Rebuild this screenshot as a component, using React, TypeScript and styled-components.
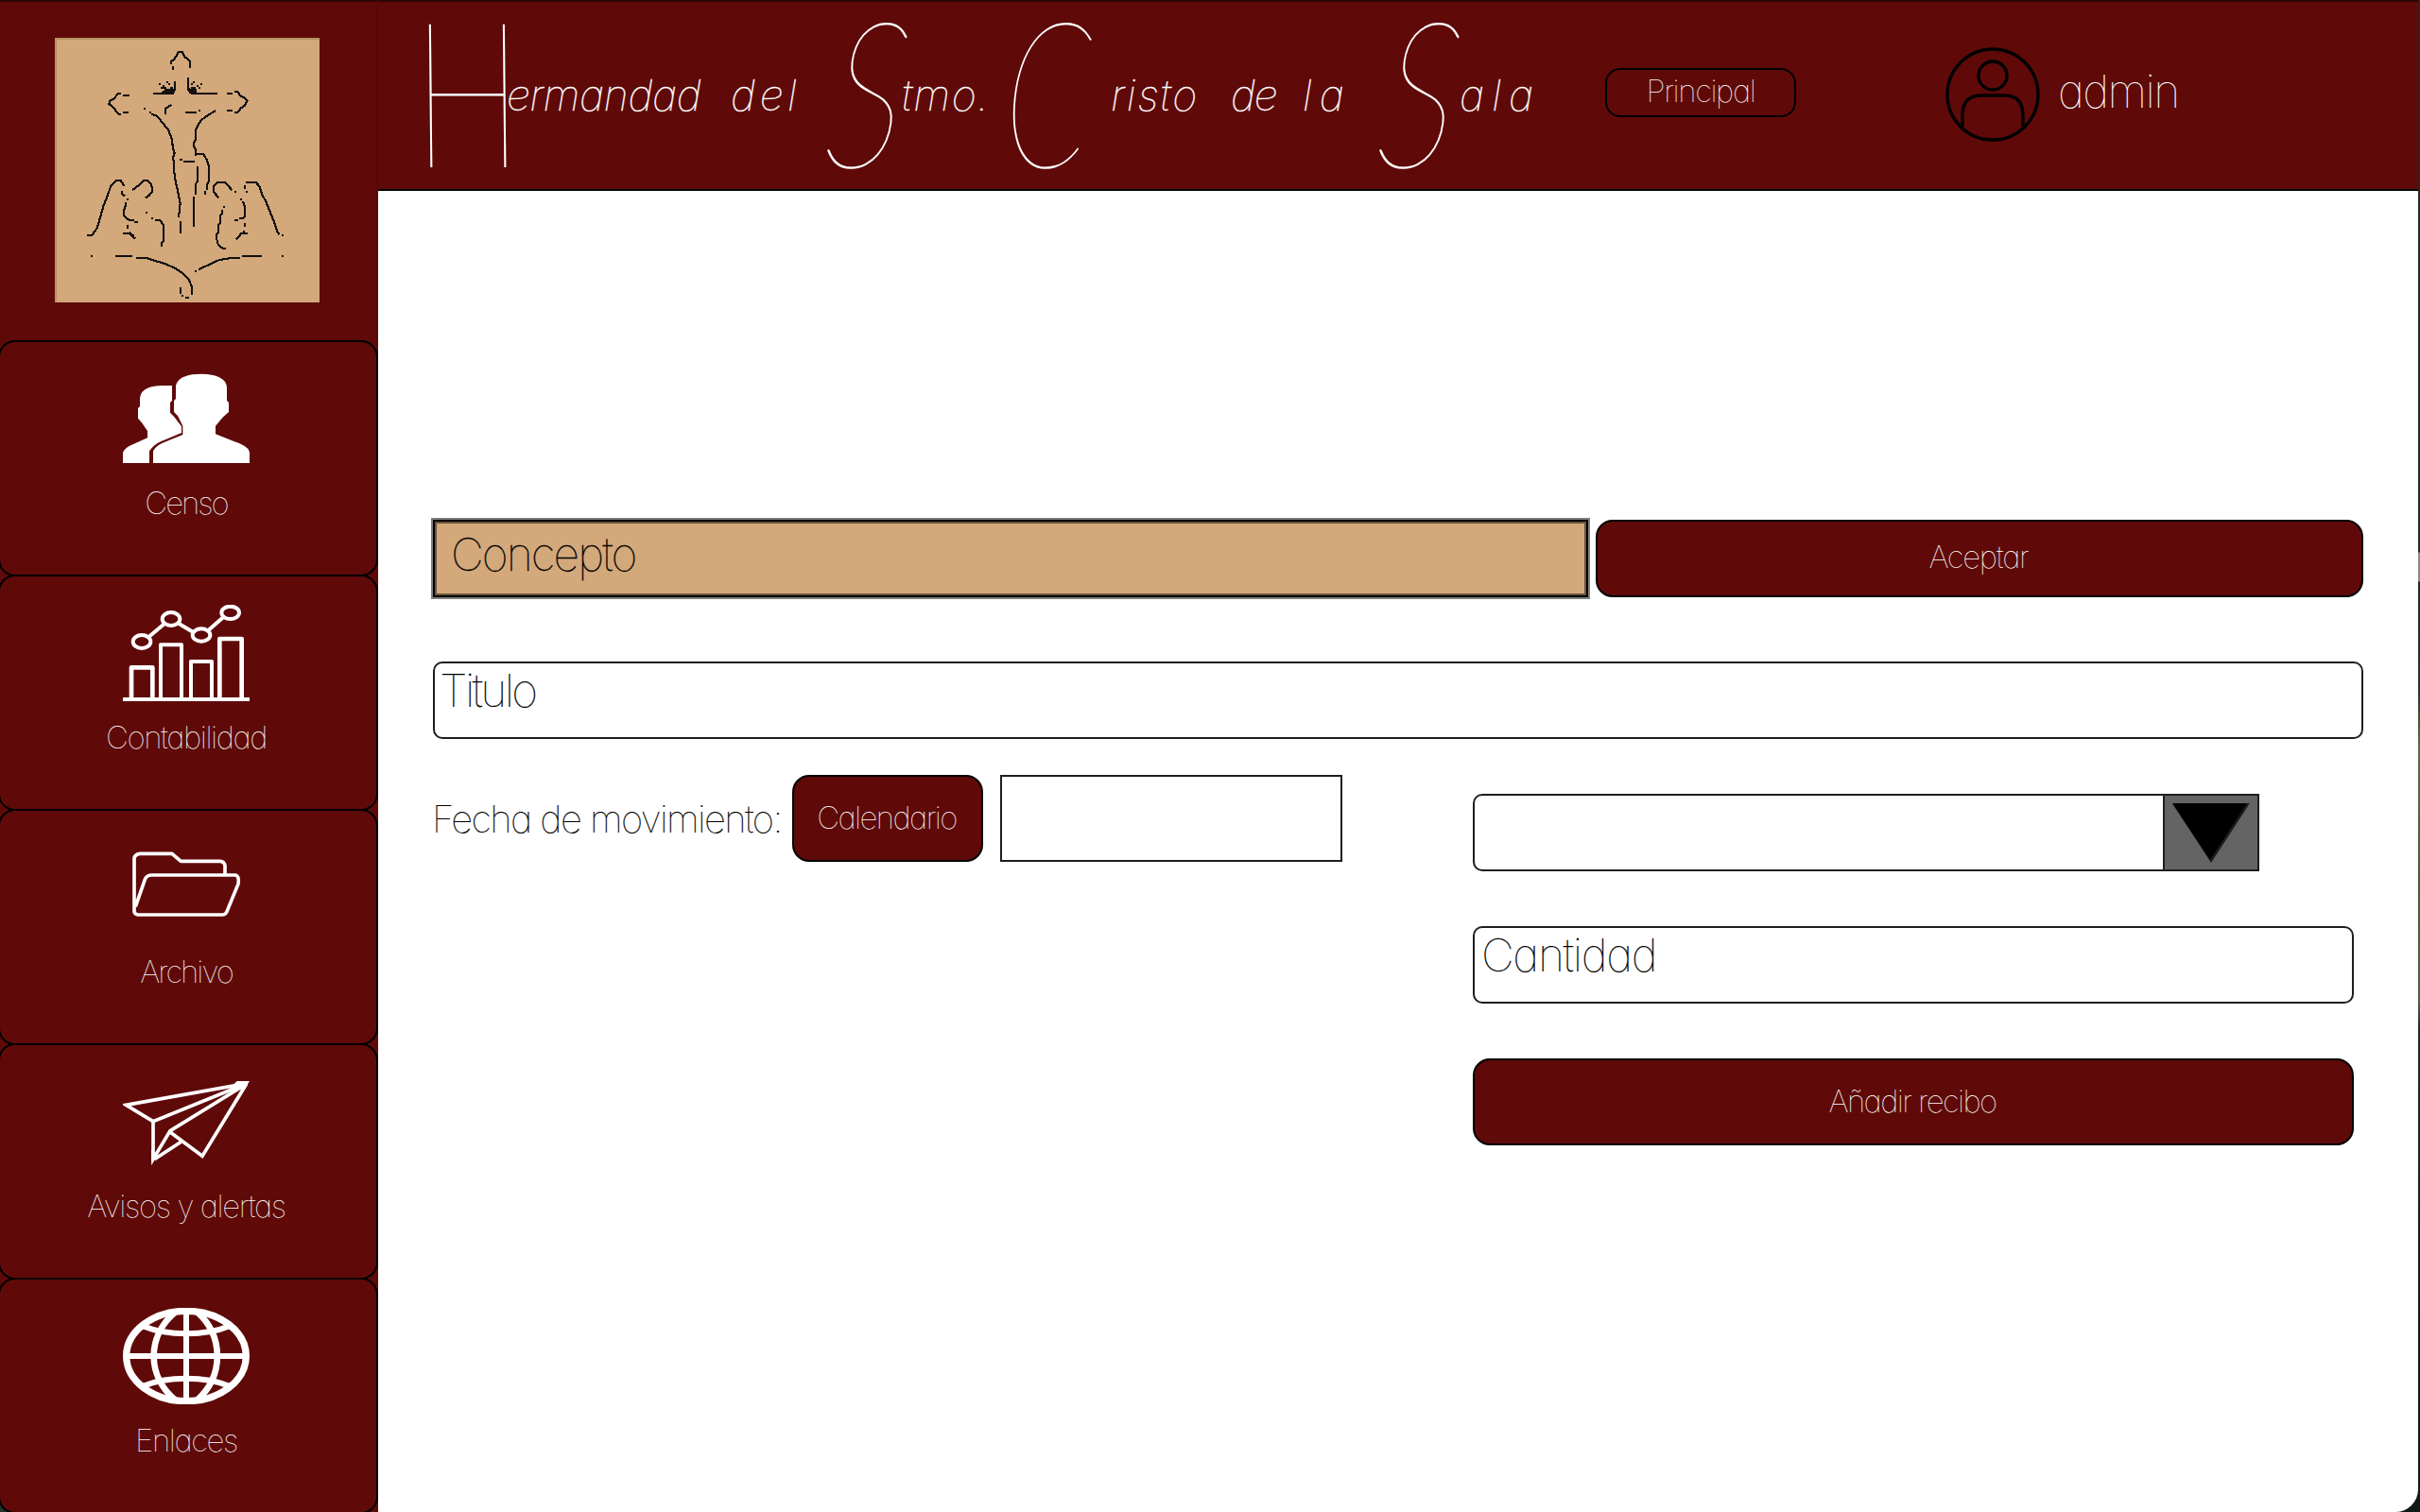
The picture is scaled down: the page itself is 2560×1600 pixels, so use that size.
import React from "react";
import styled, { createGlobalStyle } from "styled-components";

const wine = "#5f0a09";
const tan = "#d3a87b";
const ink = "#1e1e1e";

const GlobalStyle = createGlobalStyle`
  * { box-sizing: border-box; }
  body {
    margin: 0;
    background: #111a16;
    font-family: Inter, "Liberation Sans", sans-serif;
    font-weight: 100;
    font-feature-settings: "cv11";
  }
`;

const Screen = styled.div`
  display: flex;
  width: 2560px;
  height: 1600px;
  overflow: hidden;
  background: linear-gradient(
    #3b1a18 0, #3b1a18 200px, #1d2f26 210px, #1d2f26 584px,
    #8a8a8a 585px, #8a8a8a 615px, #1c2c25 616px, #22372b 730px,
    #4f7048 790px, #3f5d3e 930px, #45624a 1060px, #1f2b25 1090px, #111a16 1400px
  );
`;

const Sidebar = styled.aside`
  display: flex;
  flex-direction: column;
  width: 400px;
  height: 1600px;
  overflow: hidden;
  background: linear-gradient(${wine} 1500px, #24332a 1500px);
`;

const LogoArea = styled.div`
  display: flex;
  justify-content: center;
  height: 360px;
  padding: 38px 2px 0 0;
  flex: none;
  border-top: 2px solid #2f0404;
  border-right: 2px solid #560807;
  background: linear-gradient(${wine}, ${wine}) padding-box;
`;

const Logo = styled.div`
  width: 280px;
  height: 280px;
  background: ${tan};
  box-shadow: inset 2px 2px 0 #b8915f;
`;

const Menu = styled.nav`
  display: flex;
  flex-direction: column;
  flex: none;
  margin-left: -2px;
  background: ${wine};
  border-bottom-left-radius: 20px;
`;

const MenuItem = styled.button`
  display: flex;
  flex-direction: column;
  align-items: center;
  height: 250px;
  margin: 0 0 -2px;
  padding: 30px 5px 0 0;
  border: 2px solid #000;
  border-radius: 18px;
  background: ${wine};
  color: #fff;
  font: inherit;
`;

const MenuLabel = styled.span<{ $ls: number }>`
  margin: 18px 0 0 1px;
  font-size: 33px;
  line-height: 40px;
  letter-spacing: ${p => p.$ls}px;
  white-space: nowrap;
`;

const Main = styled.div`
  display: flex;
  flex-direction: column;
  width: 2158px;
  height: 1600px;
  background: #fff;
  border-bottom-right-radius: 24px;
`;

const Header = styled.header`
  display: flex;
  align-items: center;
  flex: none;
  height: 202px;
  padding-left: 35px;
  border-top: 2px solid #2f0404;
  border-bottom: 2px solid #000;
  background: ${wine};
  color: #fff;
`;

const Title = styled.h1`
  display: flex;
  width: 1263px;
  height: 196px;
  margin: 0;
  font-style: italic;
  font-weight: 100;
  font-size: 45px;
  line-height: 195px;
  white-space: nowrap;
`;

const Word = styled.span<{ $w: number }>`
  display: flex;
  width: ${p => p.$w}px;
`;

const Cap = styled.span<{ $w: number; $scale: number; $skew: number }>`
  width: ${p => p.$w}px;
  font-family: Lato, sans-serif;
  font-weight: 100;
  font-size: 216px;
  line-height: 181px;
  transform: skewX(${p => p.$skew}deg) scaleX(${p => p.$scale});
  transform-origin: 0 50%;
`;

const Rest = styled.span<{ $ls: number }>`
  letter-spacing: ${p => p.$ls}px;
  -webkit-text-stroke: 0.4px #fff;
`;

const HomeButton = styled.button`
  width: 202px;
  height: 52px;
  margin: 0 158px 6px 0;
  padding: 0 0 4px;
  border: 2px solid #000;
  border-radius: 16px;
  background: ${wine};
  color: #fff;
  font: inherit;
  font-size: 33px;
  letter-spacing: -1.4px;
`;

const UserName = styled.span`
  margin: 0 0 9px 19px;
  font-size: 48px;
  line-height: 60px;
  letter-spacing: -1.6px;
`;

const Form = styled.main`
  display: flex;
  flex-direction: column;
  padding: 346px 58px 0 56px;
`;

const ConceptRow = styled.div`
  display: flex;
  align-items: center;
  gap: 6px;
`;

const Concept = styled.div`
  width: 1226px;
  height: 86px;
  padding: 4px 0 0 19px;
  border: 2px solid #808080;
  background: ${tan};
  box-shadow: inset 0 0 0 2px #000, inset 0 0 0 4px #6a543d;
  color: #000;
  font-size: 48px;
  line-height: 66px;
  letter-spacing: -1.9px;
  -webkit-text-stroke: 0.3px #000;
`;

const Button = styled.button<{ $w: number; $h: number; $ls: number; $lift?: number }>`
  width: ${p => p.$w}px;
  height: ${p => p.$h}px;
  padding: 0 2px ${p => p.$lift || 0}px 0;
  border: 2px solid #000;
  border-radius: 18px;
  background: ${wine};
  color: #fff;
  font: inherit;
  font-size: 33px;
  letter-spacing: ${p => p.$ls}px;
`;

const Field = styled.div<{ $ls: number }>`
  height: 82px;
  padding-left: 7px;
  border: 2px solid ${ink};
  border-radius: 10px;
  background: #fff;
  color: #000;
  font-size: 48px;
  line-height: 58px;
  letter-spacing: ${p => p.$ls}px;
  -webkit-text-stroke: 0.2px #000;
`;

const TitleField = styled(Field)`
  margin: 66px 0 0 2px;
  padding-left: 5px;
`;

const Columns = styled.div`
  display: flex;
  justify-content: space-between;
  padding: 38px 10px 0 2px;
`;

const DateRow = styled.div`
  display: flex;
  align-items: center;
  height: 92px;
`;

const DateLabel = styled.label`
  width: 381px;
  margin-left: -1px;
  color: #000;
  font-size: 40px;
  line-height: 91px;
  letter-spacing: -1.6px;
  white-space: nowrap;
  -webkit-text-stroke: 0.2px #000;
`;

const DateBox = styled.div`
  width: 362px;
  height: 92px;
  margin-left: 18px;
  border: 2px solid ${ink};
`;

const AmountColumn = styled.div`
  display: flex;
  flex-direction: column;
  gap: 58px;
  width: 932px;
  padding-top: 20px;
`;

const Select = styled.div`
  display: flex;
  justify-content: flex-end;
  width: 832px;
  height: 82px;
  border: 2px solid ${ink};
  border-radius: 10px 0 0 10px;
`;

const SelectArrow = styled.div`
  display: flex;
  justify-content: center;
  width: 100px;
  padding-top: 8px;
  border-left: 2px solid ${ink};
  background: #646464;
`;

const Avatar = styled.svg`
  margin-bottom: 2px;
`;

const CensusIcon = () => (
  <svg width="134" height="102" viewBox="390 126 402 306" fill="#fff">
    <path d="M390 420V388Q393 376 410 366L468 340V318L450 292L438 278V246L444 240V212Q448 190 468 182Q490 173 520 174H546V222L540 228V260L552 272L576 304V324L528 344Q496 354 480 374L474 382V420Z" />
    <path d="M486 420V382Q494 366 516 356L580 330V302L564 270L552 258V222L558 216V174Q564 152 590 144Q606 137 640 137Q676 137 696 148Q718 158 720 180V222L726 228V258L708 274L684 302V328L744 352Q776 362 788 376L792 386V420Z" />
  </svg>
);

const ChartIcon = () => (
  <svg width="134" height="102" viewBox="390 870 402 306" fill="none" stroke="#fff" strokeWidth="12">
    <path d="M390 1170H792" />
    <path d="M417 1164V1069H484V1164" strokeWidth="14" strokeLinejoin="round" />
    <path d="M510 1164V997H576V1164M606 1164V1050H672V1164" strokeLinejoin="round" />
    <path d="M697 1164V978H767V1164" strokeWidth="14" strokeLinejoin="round" />
    <ellipse cx="450" cy="987" rx="28" ry="21" />
    <ellipse cx="543" cy="915" rx="28" ry="21" />
    <ellipse cx="639" cy="966" rx="28" ry="20" />
    <ellipse cx="731" cy="895" rx="28" ry="20" />
    <path d="M472 972L522 930M568 930L612 956M662 950L710 908" />
  </svg>
);

const FolderIcon = () => (
  <svg width="134" height="102" viewBox="390 144 402 306" fill="none" stroke="#fff" strokeWidth="11" strokeLinejoin="round">
    <path d="M714 254V228Q712 215 698 214H574L546 190H444Q427 192 426 206V374Q428 384 440 384H706Q716 384 720 374L756 286Q760 262 748 258H478Q464 260 460 272L430 358" />
  </svg>
);

const PlaneIcon = () => (
  <svg width="134" height="102" viewBox="390 888 402 306" fill="none" stroke="#fff" strokeWidth="11" strokeLinejoin="miter">
    <path d="M784 919L400 988L486 1040Z" />
    <path d="M486 1040V1160L540 1070L782 921L642 1150L540 1074M490 1160L576 1104" />
    <path d="M480 1168V1130L504 1150Z" fill="#fff" stroke="none" />
    <path d="M792 912H752L736 928L776 938Z" fill="#fff" stroke="none" />
  </svg>
);

const GlobeIcon = () => (
  <svg width="134" height="102" viewBox="390 252 402 306" fill="none" stroke="#fff" strokeWidth="18">
    <ellipse cx="591" cy="405" rx="190" ry="143" strokeWidth="22" />
    <path d="M591 260V550M400 405H782" />
    <path d="M560 262C464 340 464 470 560 548M622 262C712 340 712 470 622 548" strokeWidth="20" />
    <path d="M454 310C530 342 652 342 728 310M454 500C530 468 652 468 728 500" />
  </svg>
);

const UserIcon = () => (
  <Avatar width="100" height="100" viewBox="0 0 100 100" fill="none" stroke="#000" strokeWidth="3.4">
    <circle cx="50" cy="50" r="48" />
    <circle cx="50" cy="30" r="15" />
    <path d="M18 84V70Q19 52 36 51H64Q81 52 82 70V84" />
  </Avatar>
);

const Crucifix = () => (
  <svg width="280" height="280" viewBox="174 120 840 840" fill="none" stroke="#111" strokeWidth="6.5" shapeRendering="crispEdges">
    <path d="M543 204V195L552 190L567 165H579L586 180L603 195V215M549 210V221" />
    <path d="M411 303H390M384 297H374L362 314L350 318L346 330L362 344L376 362H384M390 357H408" />
    <path d="M720 297H738M744 291H754L764 305L776 310L784 320L776 336L764 344L754 356H744M738 351H720" />
    <path d="M486 297H549L555 285V258M597 246V285L609 297H690" />
    <path d="M514 291L530 284L552 282V294H514ZM597 278L610 284L624 288V296H600Z" fill="#111" stroke="none" />
    <path d="M504 267H510M516 273H522M528 261H534M510 279H528M534 267H540M540 279H549M522 285H546M606 267H612M612 261H618M624 273H630M636 267H642M606 279H622M630 279H636M606 285H624" />
    <path d="M456 345H462M474 357H480M480 362L498 368L516 390L534 412L545 440L549 470L554 486L549 500L552 516V540L557 575L565 610L572 645L567 690M573 702V742" />
    <path d="M525 364V345L544 332M588 357H624M630 351H636M684 351L660 366L640 380L628 398L621 412V444L616 452V466L621 474V496M621 489H645L657 508L663 530V576L657 585V602M651 606V617" />
    <path d="M570 507H580M582 513H618M627 528V574L621 585V618M615 624V720" />
    <path d="M276 747H292L308 724L318 690L328 655L340 625L352 590L368 574H384L394 590M387 606V616L396 622M402 633H408M399 642V652L393 668V684L402 694L414 699H426M426 705H438M405 714V726M390 741H410L430 758M410 738L426 750" />
    <path d="M420 603L438 590L455 574H468L480 586L484 606L474 620L462 628M462 675H468M480 693H486M492 699H508L518 714L519 764L513 772V784" />
    <path d="M737 604L714 579H690L678 590V610L694 627M744 609H750M708 657H714M705 666V678L699 686V708L693 716V738L687 744V756L692 776L706 788H718" />
    <path d="M780 609H786M777 600V588M780 579H812L824 592L832 618L844 640L856 670L868 700L880 736L886 744M894 747H900M762 633H768M771 640L777 658V688L770 693H758M756 699H744M777 708V720M786 741H766L750 760M774 732V742" />
    <path d="M288 813H294M366 813H420M432 819H466L492 828L526 838L556 852L580 868L598 886L609 910V936M600 945H588M576 939H582M573 912V932" />
    <path d="M618 861H624M630 855L660 842L694 826L726 820L762 818M768 813H832M894 813H900" />
  </svg>
);

const menu = [
  { label: "Censo", ls: -2, Icon: CensusIcon },
  { label: "Contabilidad", ls: -1.45, Icon: ChartIcon },
  { label: "Archivo", ls: -2, Icon: FolderIcon },
  { label: "Avisos y alertas", ls: -1.4, Icon: PlaneIcon },
  { label: "Enlaces", ls: -1.4, Icon: GlobeIcon },
];

const title = [
  { cap: "H", capW: 101, scale: 0.78, skew: 6, rest: "ermandad", w: 338, ls: -0.5 },
  { rest: "del", w: 105, ls: 4.5 },
  { cap: "S", capW: 76, scale: 0.76, skew: -7, rest: "tmo.", w: 185, ls: 1.4 },
  { cap: "C", capW: 112, scale: 0.66, skew: -3, rest: "risto", w: 239, ls: 2 },
  { rest: "de", w: 76, ls: -1.5 },
  { rest: "la", w: 84, ls: 8 },
  { cap: "S", capW: 82, scale: 0.76, skew: -7, rest: "ala", w: 180, ls: 8 },
];

export default function App() {
  return (
    <Screen>
      <GlobalStyle />
      <Sidebar>
        <LogoArea>
          <Logo><Crucifix /></Logo>
        </LogoArea>
        <Menu>
          {menu.map(({ label, ls, Icon }) => (
            <MenuItem key={label}>
              <Icon />
              <MenuLabel $ls={ls}>{label}</MenuLabel>
            </MenuItem>
          ))}
        </Menu>
      </Sidebar>
      <Main>
        <Header>
          <Title>
            {title.map((t, i) => (
              <Word key={i} $w={t.w}>
                {t.cap && <Cap $w={t.capW!} $scale={t.scale!} $skew={t.skew!}>{t.cap}</Cap>}
                <Rest $ls={t.ls}>{t.rest}</Rest>
              </Word>
            ))}
          </Title>
          <HomeButton>Principal</HomeButton>
          <UserIcon />
          <UserName>admin</UserName>
        </Header>
        <Form>
          <ConceptRow>
            <Concept>Concepto</Concept>
            <Button $w={812} $h={82} $ls={-1.3} $lift={5}>Aceptar</Button>
          </ConceptRow>
          <TitleField $ls={-2.7}>Titulo</TitleField>
          <Columns>
            <DateRow>
              <DateLabel>Fecha de movimiento:</DateLabel>
              <Button $w={202} $h={92} $ls={-1.6} $lift={3}>Calendario</Button>
              <DateBox />
            </DateRow>
            <AmountColumn>
              <Select>
                <SelectArrow>
                  <svg width="82" height="63" viewBox="0 0 82 63">
                    <path d="M0 0H82L41 63Z" fill="#1e1e1e" />
                    <path d="M0 0H79L40 60Z" fill="#000" />
                  </svg>
                </SelectArrow>
              </Select>
              <Field $ls={-1.35}>Cantidad</Field>
              <Button $w={932} $h={92} $ls={-1.6} $lift={2}>Añadir recibo</Button>
            </AmountColumn>
          </Columns>
        </Form>
      </Main>
    </Screen>
  );
}
